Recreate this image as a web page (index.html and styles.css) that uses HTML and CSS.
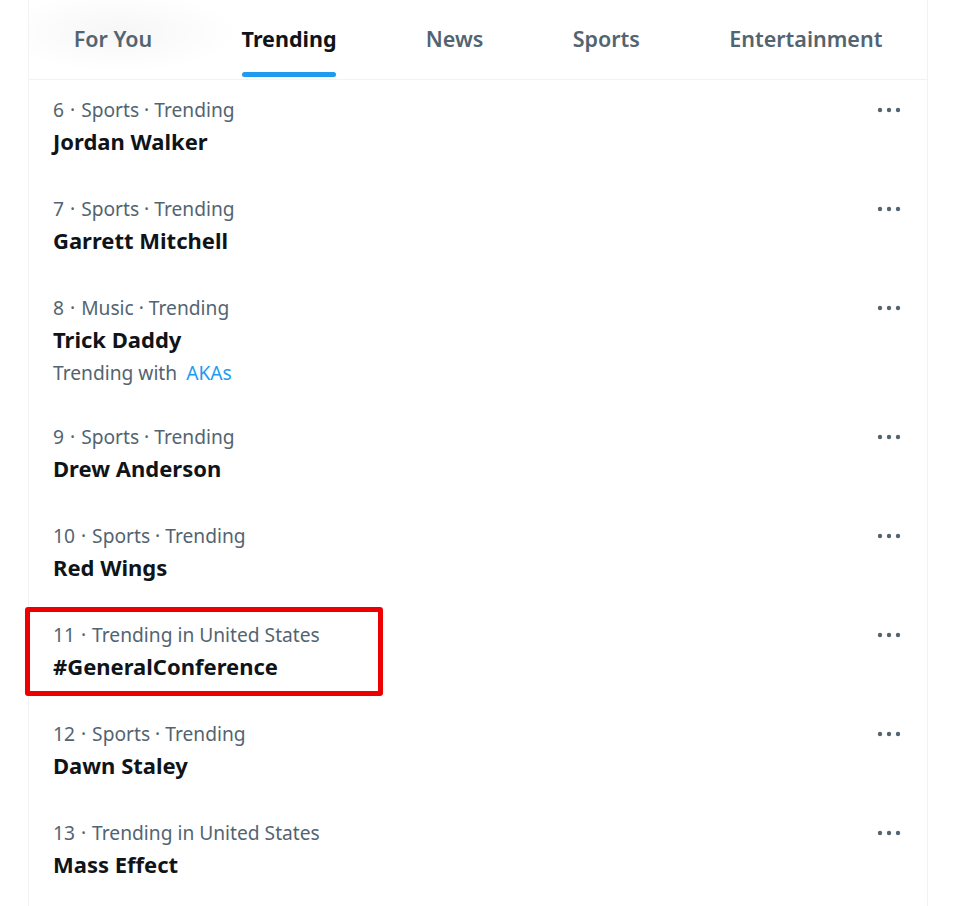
FILE: index.html
```html
<!DOCTYPE html>
<html lang="en">
<head>
<meta charset="utf-8">
<title>Explore - Trending</title>
<link rel="stylesheet" href="styles.css">
</head>
<body>
<div class="column">
  <nav class="tabs">
    <a class="tab"><span class="tab-label">For You</span></a>
    <a class="tab active"><span class="tab-label">Trending<span class="indicator"></span></span></a>
    <a class="tab"><span class="tab-label">News</span></a>
    <a class="tab"><span class="tab-label">Sports</span></a>
    <a class="tab"><span class="tab-label">Entertainment</span></a>
  </nav>
  <div class="list">
    <div class="trend">
      <div class="trend-body">
        <div class="meta">6<span class="sep">·</span>Sports · Trending</div>
        <div class="title">Jordan Walker</div>
      </div>
      <svg class="more" viewBox="0 0 24 24"><circle cx="3" cy="12" r="2.2"/><circle cx="12" cy="12" r="2.2"/><circle cx="21" cy="12" r="2.2"/></svg>
    </div>
    <div class="trend">
      <div class="trend-body">
        <div class="meta">7<span class="sep">·</span>Sports · Trending</div>
        <div class="title">Garrett Mitchell</div>
      </div>
      <svg class="more" viewBox="0 0 24 24"><circle cx="3" cy="12" r="2.2"/><circle cx="12" cy="12" r="2.2"/><circle cx="21" cy="12" r="2.2"/></svg>
    </div>
    <div class="trend">
      <div class="trend-body">
        <div class="meta">8<span class="sep">·</span>Music · Trending</div>
        <div class="title">Trick Daddy</div>
        <div class="extra">Trending with <a class="link">AKAs</a></div>
      </div>
      <svg class="more" viewBox="0 0 24 24"><circle cx="3" cy="12" r="2.2"/><circle cx="12" cy="12" r="2.2"/><circle cx="21" cy="12" r="2.2"/></svg>
    </div>
    <div class="trend">
      <div class="trend-body">
        <div class="meta">9<span class="sep">·</span>Sports · Trending</div>
        <div class="title">Drew Anderson</div>
      </div>
      <svg class="more" viewBox="0 0 24 24"><circle cx="3" cy="12" r="2.2"/><circle cx="12" cy="12" r="2.2"/><circle cx="21" cy="12" r="2.2"/></svg>
    </div>
    <div class="trend">
      <div class="trend-body">
        <div class="meta">10<span class="sep">·</span>Sports · Trending</div>
        <div class="title">Red Wings</div>
      </div>
      <svg class="more" viewBox="0 0 24 24"><circle cx="3" cy="12" r="2.2"/><circle cx="12" cy="12" r="2.2"/><circle cx="21" cy="12" r="2.2"/></svg>
    </div>
    <div class="trend">
      <div class="highlight"></div>
      <div class="trend-body">
        <div class="meta">11<span class="sep">·</span>Trending in United States</div>
        <div class="title">#GeneralConference</div>
      </div>
      <svg class="more" viewBox="0 0 24 24"><circle cx="3" cy="12" r="2.2"/><circle cx="12" cy="12" r="2.2"/><circle cx="21" cy="12" r="2.2"/></svg>
    </div>
    <div class="trend">
      <div class="trend-body">
        <div class="meta">12<span class="sep">·</span>Sports · Trending</div>
        <div class="title">Dawn Staley</div>
      </div>
      <svg class="more" viewBox="0 0 24 24"><circle cx="3" cy="12" r="2.2"/><circle cx="12" cy="12" r="2.2"/><circle cx="21" cy="12" r="2.2"/></svg>
    </div>
    <div class="trend">
      <div class="trend-body">
        <div class="meta">13<span class="sep">·</span>Trending in United States</div>
        <div class="title">Mass Effect</div>
      </div>
      <svg class="more" viewBox="0 0 24 24"><circle cx="3" cy="12" r="2.2"/><circle cx="12" cy="12" r="2.2"/><circle cx="21" cy="12" r="2.2"/></svg>
    </div>
  </div>
</div>
</body>
</html>
```
FILE: styles.css
```css
* { box-sizing: border-box; }
html, body {
  margin: 0;
  padding: 0;
  background: #ffffff;
  height: 100%;
  overflow: hidden;
}
body {
  font-family: "Noto Sans", "Open Sans", "Liberation Sans", sans-serif;
  color: #0f1419;
}
.column {
  margin-left: 28px;
  width: 900px;
  min-height: 906px;
  border-left: 1px solid #eff3f4;
  border-right: 1px solid #eff3f4;
}
.tabs {
  display: flex;
  height: 80px;
  border-bottom: 1px solid #eff3f4;
  background: radial-gradient(ellipse 120px 40px at 90px 32px, rgba(0,0,0,0.035), rgba(0,0,0,0) 100%);
}
.tab {
  flex: 1 1 auto;
  display: flex;
  justify-content: center;
  align-items: center;
  font-size: 21.5px;
  font-weight: 600;
  color: #536471;
  cursor: pointer;
}
.tab-label {
  position: relative;
  height: 79px;
  display: flex;
  align-items: center;
  padding-bottom: 2px;
}
.tab.active { color: #0f1419; font-weight: 700; }
.indicator {
  position: absolute;
  left: 0;
  right: 0;
  bottom: 2px;
  height: 5px;
  border-radius: 9999px;
  background: #1d9bf0;
}
.trend {
  position: relative;
  display: flex;
  justify-content: space-between;
  padding: 16px 24px 25px 24px;
}
.trend-body { display: flex; flex-direction: column; }
.meta {
  height: 28px;
  font-size: 19.2px;
  line-height: 28px;
  color: #536471;
}
.sep { padding: 0 6px; }
.title {
  height: 26px;
  margin-top: 4px;
  font-size: 22px;
  line-height: 26px;
  font-weight: 700;
  color: #0f1419;
}
.extra {
  height: 28px;
  margin-top: 7px;
  margin-bottom: -5px;
  font-size: 19.2px;
  line-height: 28px;
  color: #536471;
}
.link { color: #1d9bf0; margin-left: 4px; }
.more {
  width: 24px;
  height: 24px;
  margin-top: 2px;
  fill: #536471;
  margin-right: 2px;
}
.highlight {
  position: absolute;
  left: -4px;
  top: 2px;
  width: 358px;
  height: 89px;
  border: 5px solid #ee0000;
  border-radius: 3px;
}
```
